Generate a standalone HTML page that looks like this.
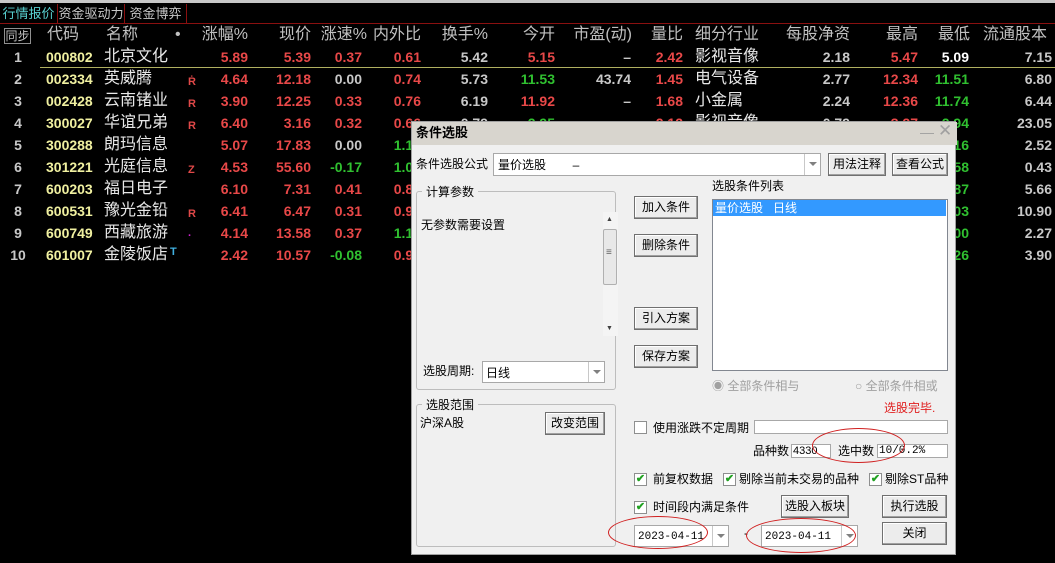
<!DOCTYPE html>
<html><head><meta charset="utf-8">
<style>
*{margin:0;padding:0;box-sizing:border-box}
body{width:1055px;height:563px;background:#000;overflow:hidden;position:relative;font-family:"Liberation Sans","Noto Sans CJK SC",sans-serif}
.a{position:absolute;white-space:nowrap}
.top{left:0;top:0;width:1055px;height:3px;background:#c8c8c8}
.tab{top:4px;height:19px;font-size:13px;line-height:19px;color:#c8c8c8;text-align:center;border-right:1px solid #8a1010}
.hd{top:25px;height:20px;font-size:16px;line-height:20px;color:#c0c0c0}
.row{position:absolute;left:0;width:1055px;height:22px}
.row div{position:absolute;top:0;height:22px;line-height:22px;white-space:nowrap}
.n{font-size:14px;font-weight:bold;text-align:right}
.i{left:0;width:36px;text-align:center;color:#c8c8c8;font-size:14px;font-weight:bold}
.cd{left:46px;color:#f0f0a0;font-size:14px;font-weight:bold}
.nm{left:104px;color:#e8e8e8;font-size:16px}
.mk{left:188px;color:#e04848;font-size:11px;font-weight:bold;top:3px!important}
.z1{left:198px;width:50px}.z2{left:255px;width:56px}.z3{left:315px;width:47px}.z4{left:370px;width:51px}
.z5{left:430px;width:58px}.z6{left:495px;width:60px}.z7{left:570px;width:61px}.z8{left:640px;width:43px}
.ind{left:695px;color:#e8e8e8;font-size:16px}
.z9{left:760px;width:90px}.z10{left:860px;width:58px}.z11{left:925px;width:44px}.z12{left:980px;width:72px}
.r{color:#e84848}.g{color:#30c030}.w{color:#c8c8c8}
.dlg{position:absolute;left:411px;top:121px;width:545px;height:434px;background:#f0f0f0;font-size:12px;color:#000;border:1px solid #a0a0a0}
.tb{position:absolute;left:0;top:0;width:545px;height:23px;background:#d8d5ce}
.d{position:absolute;white-space:nowrap;font-size:12px;line-height:14px}
.btn{position:absolute;background:#ececec;border:1px solid #707070;box-shadow:inset -1px -1px #a0a0a0,inset 1px 1px #fff;font-size:12px;text-align:center}
.box{position:absolute;background:#fff;border:1px solid #a8a8a8}
.grp{position:absolute;border:1px solid #bdbdbd;border-radius:3px}
.gl{position:absolute;background:#f0f0f0;padding:0 4px;font-size:12px}
.arr{position:absolute;right:0;top:0;width:16px;height:100%;border-left:1px solid #c8c8c8}
.arr:after{content:"";position:absolute;left:4px;top:8px;border:4px solid transparent;border-top:4px solid #808080}
.cb{position:absolute;width:13px;height:13px;background:#fff;border:1px solid #8e8f8f;font-size:11px;line-height:11px;color:#21a121;text-align:center;font-weight:bold}
.ell{position:absolute;border:1px solid #d02020;border-radius:50%}
</style></head><body>
<div class="a top"></div>
<div class="a tab" style="left:0;width:58px;color:#58d0d0">行情报价</div>
<div class="a tab" style="left:58px;width:67px">资金驱动力</div>
<div class="a tab" style="left:125px;width:62px">资金博弈</div>
<div class="a" style="left:0;top:23px;width:1055px;height:1px;background:#8a1010"></div>
<div class="a" style="left:4px;top:28px;width:27px;height:16px;border:1px solid #909090;color:#c0c0c0;font-size:12px;line-height:14px;text-align:center">同步</div>
<div class="a hd" style="left:47px">代码</div>
<div class="a hd" style="left:106px">名称</div>
<div class="a hd" style="left:175px">•</div>
<div class="a hd" style="left:190px;width:58px;text-align:right">涨幅%</div>
<div class="a hd" style="left:260px;width:51px;text-align:right">现价</div>
<div class="a hd" style="left:317px;width:50px;text-align:right">涨速%</div>
<div class="a hd" style="left:370px;width:51px;text-align:right">内外比</div>
<div class="a hd" style="left:430px;width:58px;text-align:right">换手%</div>
<div class="a hd" style="left:500px;width:55px;text-align:right">今开</div>
<div class="a hd" style="left:560px;width:72px;text-align:right">市盈(动)</div>
<div class="a hd" style="left:640px;width:43px;text-align:right">量比</div>
<div class="a hd" style="left:695px">细分行业</div>
<div class="a hd" style="left:770px;width:80px;text-align:right">每股净资</div>
<div class="a hd" style="left:860px;width:58px;text-align:right">最高</div>
<div class="a hd" style="left:925px;width:45px;text-align:right">最低</div>
<div class="a hd" style="left:983px">流通股本</div>

<div class="row" style="top:46px"><div class="i">1</div><div class="cd">000802</div><div class="nm">北京文化</div><div class="n z1 r">5.89</div><div class="n z2 r">5.39</div><div class="n z3 r">0.37</div><div class="n z4 r">0.61</div><div class="n z5 w">5.42</div><div class="n z6 r">5.15</div><div class="n z7 w">–</div><div class="n z8 r">2.42</div><div class="ind">影视音像</div><div class="n z9 w">2.18</div><div class="n z10 r">5.47</div><div class="n z11" style="color:#fff">5.09</div><div class="n z12 w">7.15</div></div>
<div class="a" style="left:40px;top:67px;width:1015px;height:1px;background:#b0b060"></div>
<div class="row" style="top:68px"><div class="i">2</div><div class="cd">002334</div><div class="nm">英威腾</div><div class="mk">Ṙ</div><div class="n z1 r">4.64</div><div class="n z2 r">12.18</div><div class="n z3 w">0.00</div><div class="n z4 r">0.74</div><div class="n z5 w">5.73</div><div class="n z6 g">11.53</div><div class="n z7 w">43.74</div><div class="n z8 r">1.45</div><div class="ind">电气设备</div><div class="n z9 w">2.77</div><div class="n z10 r">12.34</div><div class="n z11 g">11.51</div><div class="n z12 w">6.80</div></div>
<div class="row" style="top:90px"><div class="i">3</div><div class="cd">002428</div><div class="nm">云南锗业</div><div class="mk">R</div><div class="n z1 r">3.90</div><div class="n z2 r">12.25</div><div class="n z3 r">0.33</div><div class="n z4 r">0.76</div><div class="n z5 w">6.19</div><div class="n z6 r">11.92</div><div class="n z7 w">–</div><div class="n z8 r">1.68</div><div class="ind">小金属</div><div class="n z9 w">2.24</div><div class="n z10 r">12.36</div><div class="n z11 g">11.74</div><div class="n z12 w">6.44</div></div>
<div class="row" style="top:112px"><div class="i">4</div><div class="cd">300027</div><div class="nm">华谊兄弟</div><div class="mk">R</div><div class="n z1 r">6.40</div><div class="n z2 r">3.16</div><div class="n z3 r">0.32</div><div class="n z4 r">0.66</div><div class="n z5 w">0.79</div><div class="n z6 g">2.95</div><div class="n z7 w">–</div><div class="n z8 r">2.12</div><div class="ind">影视音像</div><div class="n z9 w">0.79</div><div class="n z10 r">3.27</div><div class="n z11 g">2.94</div><div class="n z12 w">23.05</div></div>
<div class="row" style="top:134px"><div class="i">5</div><div class="cd">300288</div><div class="nm">朗玛信息</div><div class="n z1 r">5.07</div><div class="n z2 r">17.83</div><div class="n z3 w">0.00</div><div class="n z4 g">1.12</div><div class="n z11 g">17.16</div><div class="n z12 w">2.52</div></div>
<div class="row" style="top:156px"><div class="i">6</div><div class="cd">301221</div><div class="nm">光庭信息</div><div class="mk">Z</div><div class="n z1 r">4.53</div><div class="n z2 r">55.60</div><div class="n z3 g">-0.17</div><div class="n z4 g">1.05</div><div class="n z11 g">53.58</div><div class="n z12 w">0.43</div></div>
<div class="row" style="top:178px"><div class="i">7</div><div class="cd">600203</div><div class="nm">福日电子</div><div class="n z1 r">6.10</div><div class="n z2 r">7.31</div><div class="n z3 r">0.41</div><div class="n z4 r">0.88</div><div class="n z11 g">6.87</div><div class="n z12 w">5.66</div></div>
<div class="row" style="top:200px"><div class="i">8</div><div class="cd">600531</div><div class="nm">豫光金铅</div><div class="mk">R</div><div class="n z1 r">6.41</div><div class="n z2 r">6.47</div><div class="n z3 r">0.31</div><div class="n z4 r">0.92</div><div class="n z11 g">6.03</div><div class="n z12 w">10.90</div></div>
<div class="row" style="top:222px"><div class="i">9</div><div class="cd">600749</div><div class="nm">西藏旅游</div><div class="mk" style="color:#d020d0">·</div><div class="n z1 r">4.14</div><div class="n z2 r">13.58</div><div class="n z3 r">0.37</div><div class="n z4 g">1.10</div><div class="n z11 g">13.00</div><div class="n z12 w">2.27</div></div>
<div class="row" style="top:244px"><div class="i">10</div><div class="cd">601007</div><div class="nm">金陵饭店</div><div class="mk" style="left:170px;top:-3px!important;color:#40b0e0">T</div><div class="n z1 r">2.42</div><div class="n z2 r">10.57</div><div class="n z3 g">-0.08</div><div class="n z4 r">0.95</div><div class="n z11 g">10.26</div><div class="n z12 w">3.90</div></div>

<div class="dlg">
 <div class="tb"></div>
 <div class="d" style="left:4px;top:4px;font-size:13px;font-weight:bold">条件选股</div>
 <div class="d" style="left:508px;top:3px;color:#a0a0a0;font-size:14px">—</div>
 <div class="d" style="left:526px;top:2px;color:#a0a0a0;font-size:17px">✕</div>

 <div class="d" style="left:4px;top:35px">条件选股公式</div>
 <div class="box" style="left:81px;top:31px;width:328px;height:23px"><span class="d" style="left:4px;top:4px">量价选股&nbsp;&nbsp;&nbsp;&nbsp;&nbsp;&nbsp;&nbsp;&nbsp;–</span><div class="arr"></div></div>
 <div class="btn" style="left:416px;top:31px;width:58px;height:23px;line-height:21px">用法注释</div>
 <div class="btn" style="left:480px;top:31px;width:56px;height:23px;line-height:21px">查看公式</div>

 <div class="grp" style="left:4px;top:69px;width:200px;height:199px"></div>
 <div class="gl" style="left:10px;top:61px">计算参数</div>
 <div class="d" style="left:9px;top:96px">无参数需要设置</div>
 <div class="a" style="left:191px;top:90px;width:15px;height:124px;background:#f4f4f4"></div>
 <div class="d" style="left:194px;top:91px;font-size:7px;color:#404040">▲</div>
 <div class="a" style="left:191px;top:107px;width:14px;height:56px;border:1px solid #b0b0b0;background:#e8e8e8;border-radius:2px"></div>
 <div class="d" style="left:194px;top:127px;font-size:10px;line-height:8px;color:#606060">≡</div>
 <div class="d" style="left:194px;top:200px;font-size:7px;color:#404040">▼</div>
 <div class="d" style="left:11px;top:242px">选股周期:</div>
 <div class="box" style="left:70px;top:239px;width:123px;height:22px"><span class="d" style="left:3px;top:4px">日线</span><div class="arr"></div></div>

 <div class="btn" style="left:222px;top:74px;width:64px;height:23px;line-height:21px">加入条件</div>
 <div class="btn" style="left:222px;top:112px;width:64px;height:23px;line-height:21px">删除条件</div>
 <div class="btn" style="left:222px;top:185px;width:64px;height:23px;line-height:21px">引入方案</div>
 <div class="btn" style="left:222px;top:223px;width:64px;height:23px;line-height:21px">保存方案</div>

 <div class="d" style="left:300px;top:57px">选股条件列表</div>
 <div class="box" style="left:300px;top:77px;width:236px;height:172px;border-color:#828790"></div>
 <div class="a" style="left:301px;top:78px;width:233px;height:16px;background:#3399ff;color:#fff;font-size:12px;line-height:16px;padding-left:2px">量价选股&nbsp;&nbsp;&nbsp;日线</div>

 <div class="d" style="left:300px;top:257px;color:#a0a0a0">◉ 全部条件相与</div>
 <div class="d" style="left:443px;top:257px;color:#a0a0a0">○ 全部条件相或</div>
 <div class="d" style="left:472px;top:279px;color:#e02020">选股完毕.</div>

 <div class="grp" style="left:4px;top:282px;width:200px;height:143px"></div>
 <div class="gl" style="left:10px;top:274px">选股范围</div>
 <div class="d" style="left:8px;top:294px">沪深A股</div>
 <div class="btn" style="left:133px;top:290px;width:60px;height:23px;line-height:21px">改变范围</div>

 <div class="cb" style="left:222px;top:299px"></div>
 <div class="d" style="left:241px;top:299px">使用涨跌不定周期</div>
 <div class="box" style="left:342px;top:298px;width:194px;height:14px"></div>
 <div class="d" style="left:341px;top:322px">品种数</div>
 <div class="box" style="left:379px;top:322px;width:40px;height:14px;font-size:11px;line-height:12px;padding-left:1px">4330</div>
 <div class="d" style="left:426px;top:322px">选中数</div>
 <div class="box" style="left:465px;top:322px;width:71px;height:14px;font-size:11px;line-height:12px;padding-left:1px;font-family:'Liberation Mono',monospace">10/0.2%</div>
 <div class="ell" style="left:400px;top:306px;width:93px;height:35px"></div>

 <div class="cb" style="left:222px;top:351px">✔</div>
 <div class="d" style="left:241px;top:350px">前复权数据</div>
 <div class="cb" style="left:311px;top:351px">✔</div>
 <div class="d" style="left:327px;top:350px">剔除当前未交易的品种</div>
 <div class="cb" style="left:457px;top:351px">✔</div>
 <div class="d" style="left:473px;top:350px">剔除ST品种</div>

 <div class="cb" style="left:222px;top:379px">✔</div>
 <div class="d" style="left:241px;top:378px">时间段内满足条件</div>
 <div class="btn" style="left:369px;top:373px;width:68px;height:23px;line-height:21px">选股入板块</div>
 <div class="btn" style="left:470px;top:373px;width:65px;height:23px;line-height:21px">执行选股</div>
 <div class="btn" style="left:470px;top:400px;width:65px;height:23px;line-height:21px">关闭</div>

 <div class="box" style="left:222px;top:403px;width:95px;height:22px"><span class="d" style="left:3px;top:4px;font-family:'Liberation Mono',monospace;font-size:11px">2023-04-11</span><div class="arr"></div></div>
 <div class="d" style="left:332px;top:404px">-</div>
 <div class="box" style="left:349px;top:403px;width:97px;height:22px"><span class="d" style="left:3px;top:4px;font-family:'Liberation Mono',monospace;font-size:11px">2023-04-11</span><div class="arr"></div></div>
 <div class="ell" style="left:196px;top:394px;width:100px;height:33px"></div>
 <div class="ell" style="left:334px;top:396px;width:110px;height:35px"></div>
</div>
</body></html>
